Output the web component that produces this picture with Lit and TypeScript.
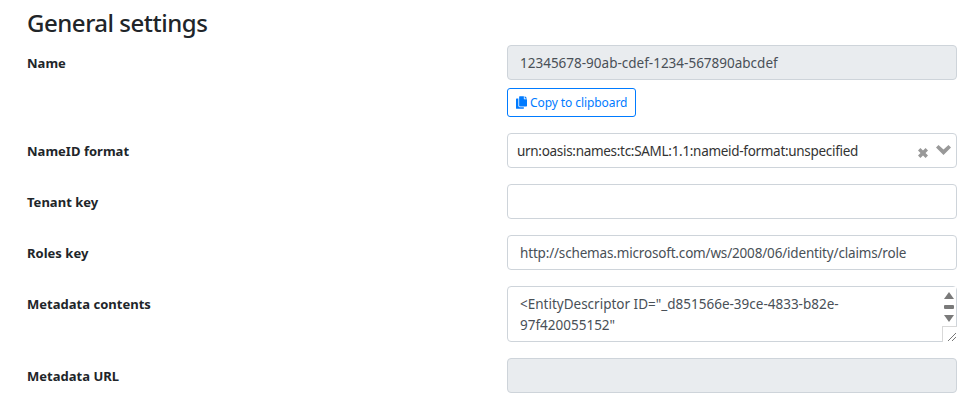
import { LitElement, html, css } from "lit";
import { customElement } from "lit/decorators.js";

@customElement("app-root")
export class AppRoot extends LitElement {
  static styles = css`
    :host {
      display: block;
      font-family: "Noto Sans", "Open Sans", "Liberation Sans", sans-serif;
      color: #212529;
      background: #fff;
      height: 403px;
      overflow: hidden;
    }
    .page {
      padding: 9px 18px 0 27px;
      display: flex;
      flex-direction: column;
    }
    h3 {
      margin: 0 0 9px;
      font-size: 24px;
      font-weight: 500;
      line-height: 27px;
      letter-spacing: -0.48px;
    }
    .row {
      display: grid;
      grid-template-columns: 480px 450px;
      margin-bottom: 16px;
    }
    label {
      font-size: 13px;
      font-weight: 700;
      line-height: 20px;
      padding-top: 8px;
      letter-spacing: 0.02px;
    }
    .field {
      box-sizing: border-box;
      width: 100%;
      height: 35px;
      border: 1px solid #ced4da;
      border-radius: 4px;
      padding: 0 12px;
      font: inherit;
      font-size: 13.5px;
      color: #495057;
      background: #fff;
      outline: none;
      display: block;
    }
    .field[readonly] { background: #e9ecef; }
    .url { letter-spacing: -0.17px; }
    .btn {
      margin-top: 8px;
      box-sizing: border-box;
      height: 29px;
      width: 129px;
      display: flex;
      align-items: center;
      gap: 3px;
      padding: 0 0 0 8px;
      border: 1px solid #007bff;
      border-radius: 3px;
      background: #fff;
      color: #007bff;
      font: inherit;
      font-size: 12px;
      letter-spacing: -0.08px;
    }
    .btn svg { width: 11px; height: 13px; fill: #007bff; flex: none; }
    .select {
      box-sizing: border-box;
      height: 35px;
      border: 1px solid #ced4da;
      border-radius: 4px;
      padding: 0 5px 0 9px;
      display: flex;
      align-items: center;
      font-size: 13.5px;
      letter-spacing: -0.3px;
      color: #333;
    }
    .select span { flex: 1; }
    .select svg { display: block; fill: #999; flex: none; }
    .x { width: 10px; height: 10px; margin-right: 8px; margin-top: 4px; }
    .chev { width: 15px; height: 10px; margin-top: -2px; }
    .ta-wrap { position: relative; height: 56px; }
    textarea {
      box-sizing: border-box;
      width: 100%;
      height: 56px;
      border: 1px solid #ced4da;
      border-radius: 4px;
      padding: 7px 100px 0 12px;
      font: inherit;
      font-size: 13.5px;
      line-height: 21px;
      color: #495057;
      resize: none;
      outline: none;
      overflow: hidden;
      display: block;
    }
    .bar {
      position: absolute;
      top: 1px;
      right: 1px;
      bottom: 1px;
      width: 15px;
      display: flex;
      flex-direction: column;
      align-items: center;
      padding-top: 5px;
      box-sizing: border-box;
      gap: 6px;
      background: #fff;
    }
    .bar svg { width: 10px; height: 7px; fill: #7a7a7a; display: block; }
    .thumb { width: 10px; height: 4px; border-radius: 1px; background: #7a7a7a; }
    .grip {
      position: absolute;
      right: 0;
      bottom: 0;
      width: 15px;
      height: 16px;
      box-sizing: border-box;
      border: 1px solid #d8d8d8;
      border-right: 0;
      border-bottom: 0;
      background: #fff;
    }
    .grip svg { display: block; width: 14px; height: 15px; }
  `;

  render() {
    return html`
      <div class="page">
        <h3>General settings</h3>
        <div class="row">
          <label>Name</label>
          <div>
            <input class="field" readonly .value=${"12345678-90ab-cdef-1234-567890abcdef"} />
            <button class="btn">
              <svg viewBox="0 0 448 512"><path d="M320 448v40c0 13.255-10.745 24-24 24H24c-13.255 0-24-10.745-24-24V120c0-13.255 10.745-24 24-24h72v296c0 30.879 25.121 56 56 56h168zm0-344V0H152c-13.255 0-24 10.745-24 24v368c0 13.255 10.745 24 24 24h272c13.255 0 24-10.745 24-24V128H344c-13.2 0-24-10.800-24-24zm120.971-31.029L375.029 7.029A24 24 0 0 0 358.059 0H352v96h96v-6.059a24 24 0 0 0-7.029-16.970z"/></svg>
              Copy to clipboard
            </button>
          </div>
        </div>
        <div class="row">
          <label>NameID format</label>
          <div class="select">
            <span>urn:oasis:names:tc:SAML:1.1:nameid-format:unspecified</span>
            <svg class="x" viewBox="0 0 10 10"><path d="M2.400 0 5 2.400 7.600 0 10 2.400 7.500 5 10 7.600 7.600 10 5 7.600 2.400 10 0 7.600 2.500 5 0 2.400Z"/></svg>
            <svg class="chev" viewBox="0 0 15 10"><path d="M2.500 0 7.500 4.600 12.500 0 15 2.600 7.500 10 0 2.600Z"/></svg>
          </div>
        </div>
        <div class="row">
          <label>Tenant key</label>
          <input class="field" />
        </div>
        <div class="row">
          <label>Roles key</label>
          <input class="field url" .value=${"http://schemas.microsoft.com/ws/2008/06/identity/claims/role"} />
        </div>
        <div class="row">
          <label>Metadata contents</label>
          <div class="ta-wrap">
            <textarea .value=${'<EntityDescriptor ID="_d851566e-39ce-4833-b82e-97f420055152"'}></textarea>
            <div class="bar">
              <svg viewBox="0 0 10 7"><path d="M5 0 10 7H0Z"/></svg>
              <div class="thumb"></div>
              <svg viewBox="0 0 10 7"><path d="M0 0H10L5 7Z"/></svg>
            </div>
            <div class="grip">
              <svg viewBox="0 0 14 15"><path d="M5 14 13 6M9 14 13 10" stroke="#777" stroke-width="1" fill="none"/></svg>
            </div>
          </div>
        </div>
        <div class="row">
          <label>Metadata URL</label>
          <input class="field" readonly />
        </div>
      </div>
    `;
  }
}
